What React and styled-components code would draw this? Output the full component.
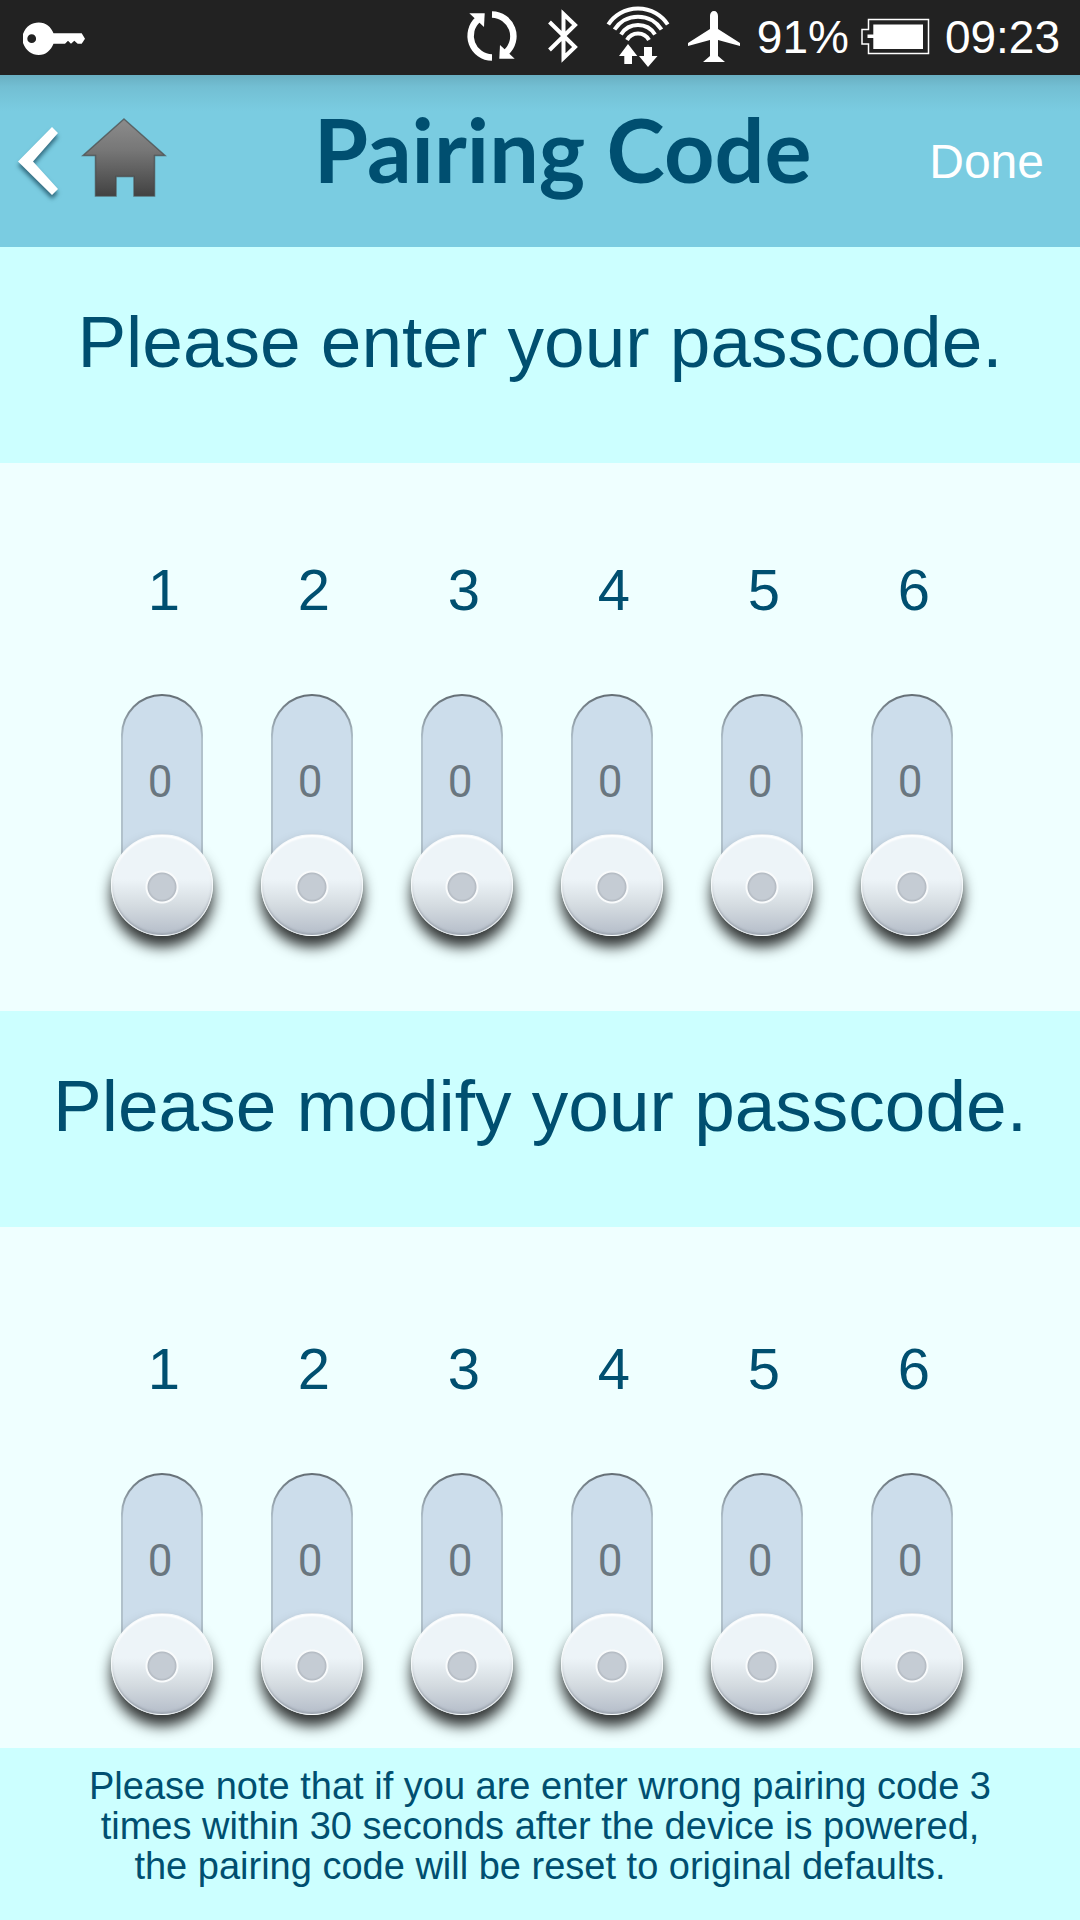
import React, { useState } from "react";
import styled, { createGlobalStyle } from "styled-components";

const digits = [1, 2, 3, 4, 5, 6];

const GlobalStyle = createGlobalStyle`
  * {
    box-sizing: border-box;
  }
  body {
    margin: 0;
    background: #ccffff;
    color: #004f70;
    font-family: "Liberation Sans", Arial, sans-serif;
  }
  h1, h2, p {
    margin: 0;
  }
  svg {
    display: block;
    flex: none;
    overflow: visible;
  }
`;

const KeyIcon = () => (
  <svg width="62" height="75" viewBox="0 0 62 75" fill="#fff">
    <path
      fillRule="evenodd"
      d="M0 34C3 26 9 22.500 15.700 22.500C23 22.500 28 27 30.500 33.300H58.700L62 38.700L58.700 43.700H54.700L51.300 40.700L48 43.700L45 40.700L42 43.700H30.500C28 50 23 55 15.700 55C9 55 3 51 0 43ZM8.700 34.300A4.400 4.400 0 1 0 8.700 43.100A4.400 4.400 0 1 0 8.700 34.300Z"
    />
  </svg>
);

const SyncIcon = () => (
  <svg width="62" height="75" viewBox="0 0 62 75">
    <g id="sync-half">
      <path d="M31 58.500A21.700 21.700 0 0 1 17 20.500" fill="none" stroke="#fff" strokeWidth="6.500" />
      <path d="M8.300 14.300H23.700L23 28Z" fill="#fff" />
    </g>
    <use href="#sync-half" transform="rotate(180 31 37)" />
  </svg>
);

const BluetoothIcon = () => (
  <svg width="62" height="75" viewBox="0 0 62 75">
    <path d="M14.500 51L40 26L28.500 15V59L40 48L14.500 23" fill="none" stroke="#fff" strokeWidth="4" />
  </svg>
);

const WifiIcon = () => (
  <svg width="62" height="75" viewBox="0 0 62 75">
    <g fill="none" stroke="#fff" strokeWidth="4">
      <path d="M-.700 25.500A35.500 35.500 0 0 1 58.700 25.500" />
      <path d="M5.500 30.500A28 28 0 0 1 52.500 30.500" />
      <path d="M12 35.500A20 20 0 0 1 46 35.500" />
      <path d="M18 41A12.500 12.500 0 0 1 40 41" />
    </g>
    <path d="M19 45L28.300 57H23V65H15.300V57H10ZM35 48H43V57H48.500L39 68L30 57H35Z" fill="#fff" />
  </svg>
);

const PlaneIcon = () => (
  <svg width="62" height="75" viewBox="0 0 62 75" fill="#fff">
    <path d="M31 12C33.500 12 35 14 35 17V30L57 44V47L35 41V57L42 63H20L27 57V41L5 47V44L27 30V17C27 14 28.500 12 31 12Z" />
  </svg>
);

const BatteryIcon = () => (
  <svg width="68" height="75" viewBox="0 0 68 75">
    <path d="M7.500 20.500H67.500V54.500H7.500V45H1V30.500H7.500Z" fill="none" stroke="#fff" strokeWidth="1.500" />
    <path d="M12.300 25.500H62V50H12.300V39H6.500V35.500H12.300Z" fill="#fff" />
  </svg>
);

const BackIcon = () => (
  <svg width="42" height="72" viewBox="0 0 42 72">
    <path d="M34 2L40 8L15 36.500L40 64L34 70L0 36.500Z" fill="#fff" />
  </svg>
);

const HomeIcon = () => (
  <svg width="84" height="86" viewBox="0 0 84 86">
    <defs>
      <linearGradient id="home-fill" x1="0" y1="0" x2="0" y2="1">
        <stop offset="0" stopColor="#8c8c8c" />
        <stop offset="0.400" stopColor="#777" />
        <stop offset="1" stopColor="#424242" />
      </linearGradient>
    </defs>
    <path
      d="M42 1L83 37.500H72.500V78H52V58.500H34V78H13.500V37.500H1Z"
      fill="url(#home-fill)"
      stroke="#484848"
      strokeOpacity="0.700"
      strokeWidth="1.500"
    />
  </svg>
);

const CodeSlider = ({ name, number }) => {
  const [value, setValue] = useState(0);
  const id = `${name}-${number}`;

  return (
    <Column>
      <Position htmlFor={id}>{number}</Position>
      <Track>
        <Value htmlFor={id}>{value}</Value>
        <Range
          id={id}
          type="range"
          min="0"
          max="9"
          value={value}
          onChange={(e) => setValue(Number(e.target.value))}
        />
      </Track>
    </Column>
  );
};

const Passcode = ({ title, name, $last }) => (
  <section>
    <Band>{title}</Band>
    <Panel $last={$last}>
      {digits.map((number) => (
        <CodeSlider key={number} name={name} number={number} />
      ))}
    </Panel>
  </section>
);

const App = () => {
  return (
    <>
      <GlobalStyle />
      <StatusBar>
        <KeyIcon />
        <StatusGroup>
          <SyncIcon />
          <BluetoothIcon />
          <WifiIcon />
          <PlaneIcon />
          <span>91%</span>
          <BatteryIcon />
          <Clock>09:23</Clock>
        </StatusGroup>
      </StatusBar>
      <Header>
        <Nav>
          <IconButton type="button" aria-label="Back" $shadow>
            <BackIcon />
          </IconButton>
          <IconButton type="button" aria-label="Home">
            <HomeIcon />
          </IconButton>
        </Nav>
        <Title>Pairing Code</Title>
        <DoneButton type="button">Done</DoneButton>
      </Header>
      <main>
        <Passcode title="Please enter your passcode." name="enter" />
        <Passcode title="Please modify your passcode." name="modify" $last />
      </main>
      <Note>
        Please note that if you are enter wrong pairing code 3
        <br />
        times within 30 seconds after the device is powered,
        <br />
        the pairing code will be reset to original defaults.
      </Note>
    </>
  );
};

const StatusBar = styled.div`
  display: flex;
  justify-content: space-between;
  align-items: center;
  height: 75px;
  padding: 0 20px 0 23px;
  background: #222;
  color: #fff;
  font-size: 46px;
  line-height: 60px;
`;

const StatusGroup = styled.div`
  display: flex;
  align-items: center;
  gap: 12px;
  padding-bottom: 2px;
`;

const Clock = styled.time`
  padding-left: 4px;
`;

const Header = styled.header`
  display: grid;
  grid-template-columns: auto 1fr auto;
  align-items: center;
  height: 172px;
  padding: 0 36px 0 18px;
  background: linear-gradient(#69afc2, #73bfd3 12px, #7acce1 36px);
`;

const Nav = styled.nav`
  display: flex;
  align-items: center;
  gap: 22px;
  padding-right: 30px;
`;

const IconButton = styled.button`
  padding: 0;
  border: 0;
  background: none;
  cursor: pointer;
  filter: ${({ $shadow }) =>
    $shadow ? "drop-shadow(0 4px 2px rgba(0, 40, 60, 0.6))" : "none"};
`;

const Title = styled.h1`
  padding-bottom: 24px;
  font-family: Lato, sans-serif;
  font-size: 88px;
  font-weight: 700;
  line-height: 100px;
  text-align: center;
  white-space: nowrap;
`;

const DoneButton = styled.button`
  padding: 2px 0 0;
  border: 0;
  background: none;
  color: #fff;
  font: inherit;
  font-size: 48px;
  line-height: 60px;
  cursor: pointer;
`;

const Band = styled.h2`
  height: 216px;
  padding-top: 50px;
  background: #ccffff;
  font-size: 73px;
  font-weight: 400;
  line-height: 90px;
  text-align: center;
`;

const Panel = styled.div`
  display: grid;
  grid-template-columns: repeat(6, 1fr);
  padding: ${({ $last }) => ($last ? "112px 93px 33px 87px" : "97px 93px 75px 87px")};
  background: #efffff;
`;

const Column = styled.div`
  display: flex;
  flex-direction: column;
  align-items: center;
  gap: 74px;
`;

const Position = styled.label`
  padding-left: 4px;
  font-size: 58px;
  line-height: 60px;
`;

const Track = styled.div`
  position: relative;
  width: 82px;
  height: 232px;
  margin-bottom: 10px;
  padding-top: 62px;
  border: 2px solid transparent;
  border-radius: 41px;
  background: linear-gradient(#ccddeb, #ccddeb) padding-box,
    linear-gradient(#636d74, #b1c1cb 45px) border-box;
  text-align: center;
`;

const Value = styled.output`
  display: block;
  padding-right: 4px;
  color: #69767f;
  font-family: Roboto, sans-serif;
  font-size: 44px;
  line-height: 48px;
`;

const Range = styled.input`
  position: absolute;
  top: -2px;
  left: -12px;
  width: 102px;
  height: 242px;
  margin: 0;
  appearance: none;
  background: none;
  writing-mode: vertical-lr;
  direction: rtl;
  cursor: pointer;

  &::-webkit-slider-thumb {
    appearance: none;
    width: 102px;
    height: 102px;
    border: 1px solid rgba(255, 255, 255, 0.6);
    border-radius: 50%;
    background: radial-gradient(
        circle at 50% 52%,
        #c5ccd4 12px,
        #b3bac2 14px,
        #f9fbfc 15px,
        #f9fbfc 16px,
        transparent 17px
      ),
      linear-gradient(#edf4f8 44%, #d5dce1 70%, #bac2cd 95%);
    box-shadow: 0 11px 14px rgba(0, 0, 0, 0.8), inset 0 2px 2px #fff,
      inset 0 -2px 2px rgba(150, 158, 168, 0.7);
  }
`;

const Note = styled.p`
  padding: 18px 20px 35px;
  background: #ccffff;
  font-size: 38px;
  line-height: 40px;
  text-align: center;
`;

export default App;
